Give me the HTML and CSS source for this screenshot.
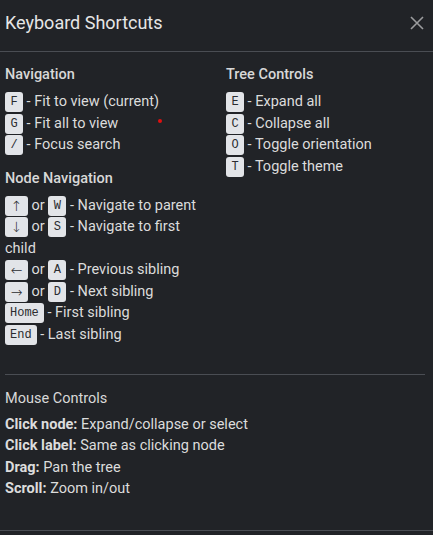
FILE: index.html
```html
<!DOCTYPE html>
<html lang="en">
<head>
<meta charset="utf-8">
<title>Keyboard Shortcuts</title>
<link rel="stylesheet" href="styles.css">
</head>
<body>
<div class="dialog">
  <header class="header">
    <h2 class="title">Keyboard Shortcuts</h2>
    <button class="close" aria-label="Close">
      <svg width="14" height="14" viewBox="0 0 14 14"><path d="M1 1 L13 13 M13 1 L1 13" stroke="currentColor" stroke-width="1.6" fill="none"/></svg>
    </button>
  </header>
  <div class="body">
    <div class="grid">
      <div class="col">
        <section class="section">
          <h3 class="section-title">Navigation</h3>
          <ul class="list">
            <li><kbd class="key">F</kbd> - Fit to view (current)</li>
            <li><kbd class="key">G</kbd> - Fit all to view</li>
            <li><kbd class="key">/</kbd> - Focus search</li>
          </ul>
        </section>
        <section class="section">
          <h3 class="section-title">Node Navigation</h3>
          <ul class="list">
            <li><kbd class="key arrow">↑</kbd> or <kbd class="key">W</kbd> - Navigate to parent</li>
            <li><kbd class="key arrow">↓</kbd> or <kbd class="key">S</kbd> - Navigate to first child</li>
            <li><kbd class="key arrow">←</kbd> or <kbd class="key">A</kbd> - Previous sibling</li>
            <li><kbd class="key arrow">→</kbd> or <kbd class="key">D</kbd> - Next sibling</li>
            <li><kbd class="key">Home</kbd> - First sibling</li>
            <li><kbd class="key">End</kbd> - Last sibling</li>
          </ul>
        </section>
      </div>
      <div class="col">
        <section class="section">
          <h3 class="section-title">Tree Controls</h3>
          <ul class="list">
            <li><kbd class="key">E</kbd> - Expand all</li>
            <li><kbd class="key">C</kbd> - Collapse all</li>
            <li><kbd class="key">O</kbd> - Toggle orientation</li>
            <li><kbd class="key">T</kbd> - Toggle theme</li>
          </ul>
        </section>
      </div>
    </div>
    <section class="mouse">
      <h3 class="section-title">Mouse Controls</h3>
      <ul class="list">
        <li><strong>Click node:</strong> Expand/collapse or select</li>
        <li><strong>Click label:</strong> Same as clicking node</li>
        <li><strong>Drag:</strong> Pan the tree</li>
        <li><strong>Scroll:</strong> Zoom in/out</li>
      </ul>
    </section>
  </div>
  <footer class="footer"></footer>
  <span class="dot"></span>
</div>
</body>
</html>
```
FILE: styles.css
```css
html, body {
  margin: 0;
  padding: 0;
  background: #212327;
}
body {
  font-family: Roboto, "Liberation Sans", sans-serif;
  color: #dcdcdc;
  width: 433px;
  height: 535px;
  overflow: hidden;
}
.dialog {
  position: relative;
  height: 535px;
  display: flex;
  flex-direction: column;
}
.header {
  flex-shrink: 0;
  height: 51px;
  border-bottom: 1px solid #4a4d53;
  display: flex;
  align-items: center;
  justify-content: space-between;
  padding: 0 9px 0 5px;
  box-sizing: content-box;
}
.title {
  margin: 0;
  font-size: 18px;
  font-weight: 400;
  color: #e6e6e6;
  line-height: 24px;
  margin-top: -5px;
}
.close {
  background: none;
  border: 0;
  padding: 0;
  color: #9b9c9e;
  width: 14px;
  height: 14px;
  display: flex;
  margin-top: -5px;
}
.body {
  flex: 1;
  min-height: 0;
  padding: 13px 8px 0 5px;
}
.grid {
  display: grid;
  grid-template-columns: 1fr 1fr;
  column-gap: 22px;
}
.section {
  margin-bottom: 13px;
}
.section-title {
  margin: 0 0 6px;
  font-size: 14.5px;
  font-weight: 500;
  line-height: 20px;
  color: #d8d8d8;
}
.list {
  list-style: none;
  margin: 0;
  padding: 0;
  font-size: 14.5px;
  line-height: 21.5px;
}
.key {
  display: inline-block;
  box-sizing: border-box;
  height: 20px;
  line-height: 20px;
  min-width: 18px;
  padding: 0 5px;
  border-radius: 3px;
  background: #e2e4e8;
  color: #2a2c30;
  font-family: "Liberation Mono", "DejaVu Sans", monospace;
  font-size: 12px;
  text-align: center;
  vertical-align: middle;
}
.key.arrow {
  min-width: 23px;
  font-family: "DejaVu Sans", sans-serif;
  font-size: 14px;
  font-weight: 300;
}
.mouse {
  border-top: 1px solid #4a4d53;
  margin-top: 16px;
  padding-top: 14px;
}
.mouse .section-title {
  font-weight: 400;
  margin-bottom: 4.5px;
}
.mouse strong {
  font-weight: 700;
}
.footer {
  flex-shrink: 0;
  height: 4px;
  border-top: 1px solid #4a4d53;
}
.dot {
  position: absolute;
  left: 158px;
  top: 119px;
  width: 4px;
  height: 4px;
  border-radius: 50%;
  background: #e01010;
}
```
